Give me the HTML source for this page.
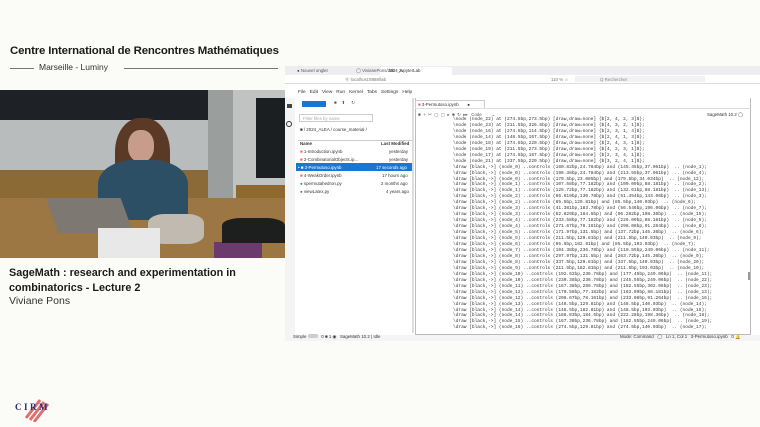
<!DOCTYPE html>
<html><head><meta charset="utf-8"><style>
*{margin:0;padding:0;box-sizing:border-box}
body{width:760px;height:427px;background:#fbfcf8;position:relative;overflow:hidden;font-family:"Liberation Sans",sans-serif}
.a{position:absolute}
.t{font-size:4.4px;color:#333;white-space:nowrap}
#code{left:453px;top:117px;font-family:"Liberation Mono",monospace;font-size:4.5px;line-height:5.95px;color:#333;white-space:pre}
</style></head><body>
<div class="a" style="left:10px;top:45px;font-size:11.4px;font-weight:bold;color:#1a1a1a;letter-spacing:-0.15px">Centre International de Rencontres Mathématiques</div>
<div class="a" style="left:10px;top:68px;width:24px;height:1px;background:#777"></div>
<div class="a" style="left:39px;top:62px;font-size:8.5px;color:#333">Marseille - Luminy</div>
<div class="a" style="left:124px;top:68px;width:154px;height:1px;background:#777"></div>

<!-- video -->
<div class="a" style="left:0;top:90px;width:285px;height:168px;background:#5b5a52;overflow:hidden">
 <div class="a" style="left:0;top:0;width:208px;height:30px;background:#1e2226"></div>
 <div class="a" style="left:0;top:30px;width:208px;height:50px;background:#b8bcbd"></div>
 <div class="a" style="left:0;top:80px;width:220px;height:30px;background:#8b6a36"></div>
 <div class="a" style="left:208px;top:0;width:25px;height:130px;background:#9a9e9c"></div>
 <div class="a" style="left:233px;top:0;width:52px;height:130px;background:#c0c3c1"></div>
 <div class="a" style="left:256px;top:8px;width:29px;height:80px;background:#1b1f21"></div>
 <div class="a" style="left:236px;top:95px;width:49px;height:35px;background:#8f6a2e"></div>
 <div class="a" style="left:0;top:108px;width:285px;height:60px;background:#9c7744"></div>
 <div class="a" style="left:115px;top:28px;width:55px;height:75px;background:#5a3a26;border-radius:45% 45% 20% 20%"></div>
 <div class="a" style="left:128px;top:40px;width:26px;height:32px;background:#c79c8a;border-radius:45%"></div>
 <div class="a" style="left:98px;top:70px;width:90px;height:60px;background:#2d4f66;border-radius:40% 40% 5% 5%"></div>
 <div class="a" style="left:52px;top:108px;width:75px;height:35px;background:#7d7872;transform:skewX(20deg)"></div>
 <div class="a" style="left:148px;top:124px;width:56px;height:30px;background:#c0bab0;border-radius:30%"></div>
 <div class="a" style="left:98px;top:138px;width:62px;height:30px;background:#e8e8e8"></div>
 <div class="a" style="left:214px;top:152px;width:48px;height:16px;background:#6b3b6e"></div>
 <div class="a" style="left:222px;top:128px;width:63px;height:25px;background:#1d1e1e;border-radius:30% 30% 0 0"></div>
</div>

<div class="a" style="left:9px;top:266px;font-size:10.8px;font-weight:bold;color:#1a1a1a;line-height:15px">SageMath : research and experimentation in<br>combinatorics - Lecture 2</div>
<div class="a" style="left:9px;top:295px;font-size:10.5px;color:#333">Viviane Pons</div>

<!-- CIRM -->
<svg class="a" style="left:14px;top:396px" width="45" height="26"><path d="M12 22L26 4M16 24L30 6M20 26L34 8" stroke="#e07070" stroke-width="3" fill="none"/></svg>
<div class="a" style="left:15px;top:402px;font-family:'Liberation Serif',serif;font-size:9px;font-weight:bold;color:#2a2a70;letter-spacing:2.5px">CIRM</div>

<!-- screen -->
<div class="a" style="left:285px;top:66px;width:475px;height:275px;background:#fff"></div>
<div class="a" style="left:285px;top:66px;width:475px;height:9px;background:#eeeef0"></div>
<div class="a" style="left:380px;top:67px;width:72px;height:8px;background:#fff;border-radius:2px 2px 0 0"></div>
<div class="a t" style="left:297px;top:68px;color:#555">● Nouvel onglet</div>
<div class="a t" style="left:356px;top:68px;color:#555">◯ VivianePons/2024_A</div>
<div class="a t" style="left:389px;top:68px">lab - JupyterLab</div>
<div class="a t" style="left:345px;top:77px;color:#777">⓪ localhost:8888/lab</div>
<div class="a" style="left:575px;top:76px;width:130px;height:6px;background:#f2f2f4"></div>
<div class="a t" style="left:551px;top:77px;color:#777">110 % ☆</div>
<div class="a t" style="left:600px;top:77px;color:#888">Q Rechercher</div>
<div class="a" style="left:285px;top:83px;width:475px;height:1px;background:#ddd"></div>
<div class="a t" style="left:298px;top:90px;font-size:4.8px">File &nbsp; Edit &nbsp; View &nbsp; Run &nbsp; Kernel &nbsp; Tabs &nbsp; Settings &nbsp; Help</div>
<div class="a" style="left:285px;top:98px;width:10px;height:243px;background:#f4f4f4"></div>
<div class="a" style="left:287px;top:104px;width:5px;height:4px;background:#444"></div>
<div class="a" style="left:286px;top:121px;width:6px;height:6px;border:1.5px solid #333;border-radius:50%"></div>
<div class="a" style="left:302px;top:101px;width:24px;height:6px;background:#1976d2"></div>
<div class="a t" style="left:334px;top:100px;color:#555">■ &nbsp;&nbsp; ⬆ &nbsp;&nbsp;&nbsp; ↻</div>
<div class="a" style="left:299px;top:114px;width:74px;height:8px;border:1px solid #ccc"></div>
<div class="a t" style="left:303px;top:116px;color:#aaa">Filter files by name</div>
<div class="a t" style="left:300px;top:127px">■ / 2024_ALEA / course_material /</div>
<div class="a" style="left:298px;top:140px;width:114px;height:1px;background:#ccc"></div>
<div class="a t" style="left:300px;top:141px;font-weight:bold">Name</div>
<div class="a t" style="left:381px;top:141px;font-weight:bold">Last Modified</div>
<div class="a t" style="left:300px;top:149px"><span style="color:#e65">■</span> 1-Introduction.ipynb</div><div class="a t" style="left:389px;top:149px">yesterday</div>
<div class="a t" style="left:300px;top:157px"><span style="color:#e65">■</span> 2-CombinatorialObjects.ip...</div><div class="a t" style="left:389px;top:157px">yesterday</div>
<div class="a" style="left:296px;top:163px;width:116px;height:8px;background:#1976d2"></div>
<div class="a t" style="left:298px;top:165px;color:#fff">• ■ 3-Permutoso.ipynb</div><div class="a t" style="left:376px;top:165px;color:#fff">17 seconds ago</div>
<div class="a t" style="left:300px;top:173px"><span style="color:#e65">■</span> 4-WeakOrder.ipynb</div><div class="a t" style="left:382px;top:173px">17 hours ago</div>
<div class="a t" style="left:300px;top:181px"><span style="color:#37a">●</span> spermutahedron.py</div><div class="a t" style="left:381px;top:181px">2 months ago</div>
<div class="a t" style="left:300px;top:189px"><span style="color:#37a">●</span> viewLatex.py</div><div class="a t" style="left:386px;top:189px">4 years ago</div>
<div class="a" style="left:412px;top:98px;width:2px;height:235px;background:#ddd"></div>
<div class="a" style="left:415px;top:98px;width:336px;height:237px;border:1px solid #bbb;border-top:none"></div>
<div class="a" style="left:415px;top:100px;width:70px;height:8px;background:#fff;border:1px solid #ccc;border-bottom:none"></div>
<div class="a t" style="left:418px;top:102px"><span style="color:#e65">■</span> 3-Permutoso.ipynb &nbsp;&nbsp;&nbsp;&nbsp;&nbsp; ●</div>
<div class="a" style="left:415px;top:108px;width:336px;height:1px;background:#ddd"></div>
<div class="a t" style="left:418px;top:112px;color:#555">■ &nbsp;+ &nbsp;✂ &nbsp;▢ &nbsp;▢ &nbsp;▸ &nbsp;■ &nbsp;↻ &nbsp;▸▸ &nbsp;&nbsp;Code &nbsp;&nbsp;&nbsp;&nbsp;&nbsp;&nbsp;&nbsp;⌄</div>
<div class="a t" style="left:707px;top:112px">SageMath 10.2 ◯</div>
<div class="a" style="left:748px;top:272px;width:2px;height:8px;background:#999"></div>
<div id="code" class="a">\node (node_22) at (274.5bp,273.5bp) [draw,draw=none] {$[2, 4, 2, 3]$};
\node (node_23) at (211.5bp,326.5bp) [draw,draw=none] {$[4, 3, 2, 1]$};
\node (node_16) at (274.5bp,114.5bp) [draw,draw=none] {$[2, 3, 1, 4]$};
\node (node_14) at (148.5bp,167.5bp) [draw,draw=none] {$[2, 4, 1, 3]$};
\node (node_18) at (274.5bp,220.5bp) [draw,draw=none] {$[2, 4, 3, 1]$};
\node (node_19) at (211.5bp,273.5bp) [draw,draw=none] {$[4, 2, 3, 1]$};
\node (node_17) at (274.5bp,167.5bp) [draw,draw=none] {$[2, 3, 4, 1]$};
\node (node_21) at (337.5bp,220.5bp) [draw,draw=none] {$[3, 2, 4, 1]$};
\draw [black,->] (node_0) ..controls (160.82bp,24.784bp) and (145.45bp,37.061bp)  .. (node_1);
\draw [black,->] (node_0) ..controls (198.38bp,24.784bp) and (213.55bp,37.061bp)  .. (node_4);
\draw [black,->] (node_0) ..controls (179.5bp,23.085bp) and (179.5bp,34.034bp)  .. (node_12);
\draw [black,->] (node_1) ..controls (107.58bp,77.182bp) and (100.09bp,88.181bp)  .. (node_2);
\draw [black,->] (node_1) ..controls (125.72bp,77.182bp) and (132.61bp,88.181bp)  .. (node_13);
\draw [black,->] (node_2) ..controls (66.619bp,130.78bp) and (51.454bp,143.06bp)  .. (node_3);
\draw [black,->] (node_2) ..controls (85.5bp,129.81bp) and (85.5bp,140.03bp)  .. (node_6);
\draw [black,->] (node_3) ..controls (41.381bp,183.78bp) and (56.546bp,196.06bp)  .. (node_7);
\draw [black,->] (node_3) ..controls (62.829bp,184.5bp) and (96.282bp,198.36bp)  .. (node_15);
\draw [black,->] (node_4) ..controls (233.58bp,77.182bp) and (226.09bp,88.181bp)  .. (node_5);
\draw [black,->] (node_4) ..controls (271.67bp,78.161bp) and (296.08bp,91.264bp)  .. (node_8);
\draw [black,->] (node_5) ..controls (171.97bp,131.5bp) and (137.72bp,145.36bp)  .. (node_6);
\draw [black,->] (node_5) ..controls (211.5bp,129.81bp) and (211.5bp,140.03bp)  .. (node_9);
\draw [black,->] (node_6) ..controls (85.5bp,182.81bp) and (85.5bp,193.03bp)  .. (node_7);
\draw [black,->] (node_7) ..controls (104.38bp,236.78bp) and (119.55bp,249.06bp)  .. (node_11);
\draw [black,->] (node_8) ..controls (297.97bp,131.5bp) and (263.72bp,145.36bp)  .. (node_9);
\draw [black,->] (node_8) ..controls (337.5bp,129.81bp) and (337.5bp,140.03bp)  .. (node_20);
\draw [black,->] (node_9) ..controls (211.5bp,182.81bp) and (211.5bp,193.03bp)  .. (node_10);
\draw [black,->] (node_10) ..controls (192.62bp,236.78bp) and (177.45bp,249.06bp)  .. (node_11);
\draw [black,->] (node_10) ..controls (230.38bp,236.78bp) and (245.55bp,249.06bp)  .. (node_22);
\draw [black,->] (node_11) ..controls (167.38bp,289.78bp) and (182.55bp,302.06bp)  .. (node_23);
\draw [black,->] (node_12) ..controls (170.58bp,77.182bp) and (163.09bp,88.181bp)  .. (node_13);
\draw [black,->] (node_12) ..controls (208.67bp,78.161bp) and (233.08bp,91.264bp)  .. (node_16);
\draw [black,->] (node_13) ..controls (148.5bp,129.81bp) and (148.5bp,140.03bp)  .. (node_14);
\draw [black,->] (node_14) ..controls (148.5bp,182.81bp) and (148.5bp,193.03bp)  .. (node_15);
\draw [black,->] (node_14) ..controls (188.03bp,184.5bp) and (222.28bp,198.36bp)  .. (node_18);
\draw [black,->] (node_15) ..controls (167.38bp,236.78bp) and (182.55bp,249.06bp)  .. (node_19);
\draw [black,->] (node_16) ..controls (274.5bp,129.81bp) and (274.5bp,140.03bp)  .. (node_17);</div>
<div class="a" style="left:295px;top:335px;width:465px;height:6px;background:#f4f4f4"></div>
<div class="a t" style="left:293px;top:334px">Simple <span style="display:inline-block;width:10px;height:4px;background:#ccc;border-radius:2px"></span> &nbsp; 0 ■ 1 ◉ &nbsp; SageMath 10.2 | Idle</div>
<div class="a t" style="left:620px;top:334px">Mode: Command &nbsp; ◯ &nbsp; Ln 1, Col 1 &nbsp; 3-Permutoso.ipynb &nbsp; 0 🔔</div>
</body></html>
